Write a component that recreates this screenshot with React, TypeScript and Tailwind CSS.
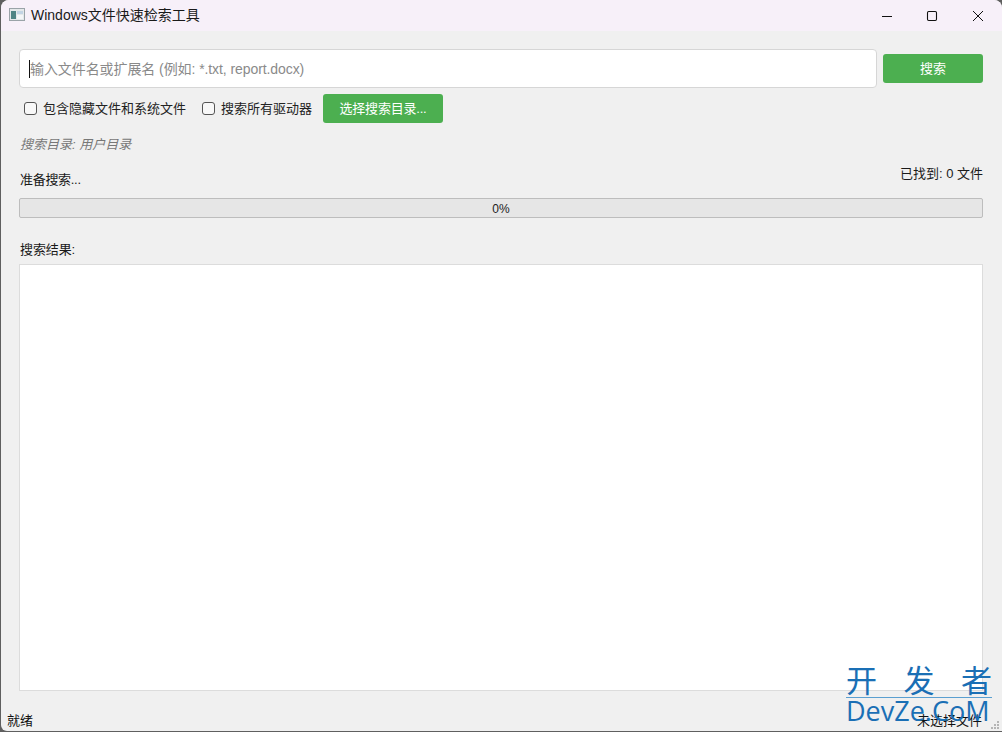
import React from "react";

const cjk = "font-['Liberation_Sans','Noto_Sans_CJK_SC',sans-serif]";

function Check({ label }: { label: string }) {
  return (
    <label className="flex items-center gap-[6px] text-[13px] leading-none text-[#222]">
      <span className="block w-[13px] h-[13px] rounded-[3px] border border-[#555] bg-[#f8f8f8]" />
      <span>{label}</span>
    </label>
  );
}

export default function App() {
  return (
    <div className={`relative w-[1002px] h-[732px] overflow-hidden bg-[#5f5f5f] pl-px pb-px ${cjk}`}>
      <div className="flex flex-col w-full h-full rounded-t-[8px] rounded-bl-[6px] bg-[#f0f0f0] overflow-hidden">
        <div className="flex items-center h-[31px] shrink-0 bg-[#f7f0f9]">
          <svg width="16" height="14" viewBox="0 0 16 14" className="ml-[8px] mt-[-2px]">
            <rect x="0.5" y="0.5" width="15" height="12" fill="#e4e8ea" stroke="#9aa3a8" />
            <rect x="2" y="3" width="5" height="8" fill="#4f8485" />
            <rect x="8" y="3" width="6" height="3" fill="#c3d4e4" />
            <rect x="8" y="7" width="6" height="4" fill="#f4f6f8" />
          </svg>
          <span className="ml-[6px] text-[14px] text-[#1a1a1a]">Windows文件快速检索工具</span>
          <div className="ml-auto flex items-center h-full">
            <svg width="46" height="30" viewBox="0 0 46 30" fill="none" stroke="#111" strokeWidth="1">
              <path d="M18 15.5h10" />
            </svg>
            <svg width="46" height="30" viewBox="0 0 46 30" fill="none" stroke="#111" strokeWidth="1.1">
              <rect x="17.5" y="10.5" width="9" height="9" rx="1.2" />
            </svg>
            <svg width="46" height="30" viewBox="0 0 46 30" fill="none" stroke="#111" strokeWidth="1">
              <path d="M17 10l10 10M27 10l-10 10" />
            </svg>
          </div>
        </div>

        <div className="flex flex-col pl-[18px] pr-[19px] pt-[18px]">
          <div className="flex items-center gap-[6px] h-[39px]">
            <div className="relative flex items-center flex-1 h-full bg-white border border-[#d6d6d6] rounded-[4px] pl-[10px] pt-[2px] text-[14px] tracking-[-0.08px] text-[#8a8a8a]">
              <span className="absolute left-[9px] top-[10px] w-px h-[18px] bg-[#111]" />
              输入文件名或扩展名 (例如: *.txt, report.docx)
            </div>
            <div className="flex items-center justify-center w-[100px] h-[29px] rounded-[3px] bg-[#4caf50] text-[13px] text-white">搜索</div>
          </div>

          <div className="flex items-center h-[29px] mt-[6px] pl-[5px]">
            <Check label="包含隐藏文件和系统文件" />
            <div className="w-[16px]" />
            <Check label="搜索所有驱动器" />
            <div className="flex items-center justify-center ml-[11px] w-[120px] h-[29px] rounded-[3px] bg-[#4caf50] text-[13px] text-white tracking-[-0.2px]">选择搜索目录...</div>
          </div>

          <div className="mt-[14px] pl-[1px] h-[16px] text-[13px] leading-[16px] italic text-[#777]">搜索目录: 用户目录</div>

          <div className="flex justify-between h-[20px] mt-[16px] text-[13px] text-[#1a1a1a]">
            <span className="pl-[1px] pt-[2px] leading-[18px] tracking-[-0.3px]">准备搜索...</span>
            <span className="mt-[-4px] leading-[18px]">已找到: 0 文件</span>
          </div>

          <div className="flex items-center justify-center h-[20px] mt-[9px] pt-[2px] bg-[#e6e6e6] border border-[#bdbdbd] rounded-[2px] text-[12px] text-[#222]">0%</div>

          <div className="mt-[24px] pl-[1px] h-[16px] text-[13px] leading-[16px] tracking-[-0.1px] text-[#1a1a1a]">搜索结果:</div>

          <div className="mt-[6px] h-[427px] bg-white border border-[#dcdcdc]" />
        </div>

        <div className="flex justify-between items-end flex-1 pl-[6px] pr-[20px] pb-[2px] text-[13px] leading-[16px] text-[#111]">
          <span>就绪</span>
          <span>未选择文件</span>
        </div>
      </div>

      <svg width="10" height="10" viewBox="0 0 10 10" className="absolute right-[2px] bottom-[2px]" fill="#b5b5b5">
        <rect x="7" y="1" width="2" height="2" />
        <rect x="4" y="4" width="2" height="2" />
        <rect x="7" y="4" width="2" height="2" />
        <rect x="1" y="7" width="2" height="2" />
        <rect x="4" y="7" width="2" height="2" />
        <rect x="7" y="7" width="2" height="2" />
      </svg>

      <div className="absolute left-[846px] top-[661px] w-[146px] flex flex-col text-[#1a6fb5]">
        <div className="flex justify-between text-[31px] leading-[36px] font-['Noto_Sans_CJK_SC',sans-serif]">
          <span>开</span><span>发</span><span>者</span>
        </div>
        <div className="border-t border-[#5a9fd0] text-[27px] leading-[25px] font-['Open_Sans',sans-serif] whitespace-nowrap">DevZe.CoM</div>
      </div>
    </div>
  );
}
